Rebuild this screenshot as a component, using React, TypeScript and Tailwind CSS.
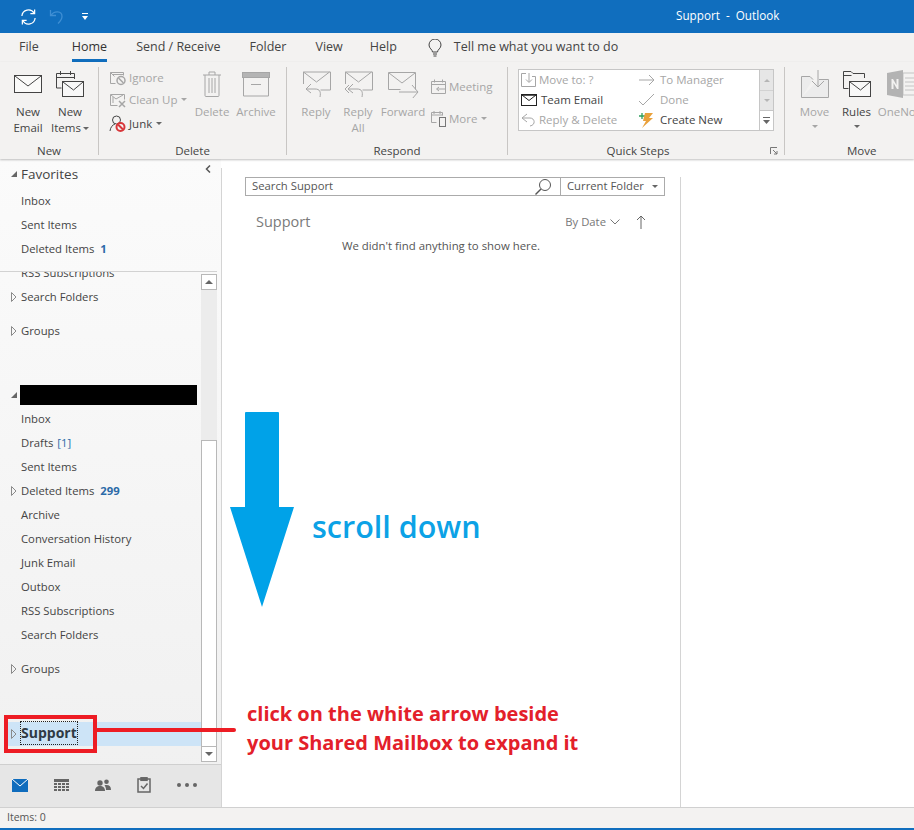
import type { ReactNode } from "react";

const dim = "#a6a6a6";
const dark = "#444444";

const Envelope = ({ color = dark, className = "" }: { color?: string; className?: string }) => (
  <svg viewBox="0 0 30 20" className={className} fill="none" stroke={color} strokeWidth="1">
    <rect x="1.5" y="1.5" width="27" height="17" fill="#fff" fillOpacity="0.6" />
    <path d="M2 2l13 10L28 2" />
  </svg>
);

const IconNewItems = () => (
  <svg viewBox="0 0 30 30" className="w-[30px] h-[30px]" fill="none" stroke={dark}>
    <path d="M1.5 19V4.5h18V10M1.5 8.5h18M5.5 2v4M15.5 2v4" />
    <path d="M1.5 19h5" />
    <rect x="7.5" y="12.5" width="21" height="15" fill="#f8f8f8" />
    <path d="M8 13l10.5 8L28 13" />
  </svg>
);

const IconIgnore = () => (
  <svg viewBox="0 0 18 16" className="w-[18px] h-[16px]" fill="none" stroke={dim}>
    <path d="M1.5 13.5V2.5h13v3M1.5 2.5l4 4" />
    <path d="M4 4.5h11M1.5 13.5h5" />
    <circle cx="12" cy="10.5" r="4" strokeWidth="1.5" />
    <path d="M9.5 8l5 5" strokeWidth="1.5" />
  </svg>
);

const IconCleanUp = () => (
  <svg viewBox="0 0 18 16" className="w-[18px] h-[16px]" fill="none" stroke={dim}>
    <path d="M1.5 13.5V2.5h14v5M1.5 13.5h7M2 3l5 4 7-4" />
    <path d="M4 5v6" />
    <path d="M10 9l6 6M16 9l-6 6" strokeWidth="1.5" />
  </svg>
);

const IconJunk = () => (
  <svg viewBox="0 0 18 18" className="w-[18px] h-[18px]" fill="none">
    <circle cx="7.5" cy="5" r="4" stroke={dark} />
    <path d="M1 16c.5-4 2.500-6 5-7" stroke={dark} />
    <circle cx="11.5" cy="12" r="4" stroke="#d8373a" strokeWidth="2" />
    <path d="M9 9.500l5 5" stroke="#d8373a" strokeWidth="2" />
  </svg>
);

const IconTrash = () => (
  <svg viewBox="0 0 20 28" className="w-[20px] h-[28px]" fill="none" stroke={dim}>
    <path d="M1 5h18M7 5V2h6v3M3 5v20.500q0 1 1 1h12q1 0 1-1V5M7 8v15M10 8v15M13 8v15" />
  </svg>
);

const IconArchive = () => (
  <svg viewBox="0 0 28 25" className="w-[28px] h-[25px] mt-[2px]" fill="none" stroke={dim}>
    <rect x="0.500" y="0.500" width="27" height="5" fill="#b4b4b4" />
    <path d="M1.500 6v18h25V6M9 12.500h10" />
  </svg>
);

const IconReply = ({ all }: { all?: boolean }) => (
  <svg viewBox="0 0 30 28" className="w-[30px] h-[28px]" fill="none" stroke={dim}>
    <path d="M3 3h27v18H20M3 3v12M3 3l13 10L29 3" transform="translate(-.5 -1)" />
    {all && <path d="M6 15l-4 4 4 4" />}
    <path d="M10 14l-5 5 5 4M5 19h9c5 0 6 3 5 8" />
  </svg>
);

const IconForward = () => (
  <svg viewBox="0 0 32 28" className="w-[32px] h-[28px]" fill="none" stroke={dim}>
    <path d="M1.500 19.500v-17h27v17M1.500 19.500h12M2 3l13 10L28 3" />
    <path d="M12 22h19M25 15l6 7-6 7" />
  </svg>
);

const IconMeeting = () => (
  <svg viewBox="0 0 17 17" className="w-[17px] h-[17px]" fill="none" stroke={dim}>
    <path d="M1.500 15.500v-12h14v12zM1.500 6.500h14M4.500 1.500v3M12.500 1.500v3" />
    <path d="M9 9l-2.500 2 2.500 2M7 11h8" />
  </svg>
);

const IconMore = () => (
  <svg viewBox="0 0 17 17" className="w-[17px] h-[17px]" fill="none" stroke={dim}>
    <path d="M1.500 12.500v-10h11v3M1.500 5h11M4 1v3M10 1v3M1.500 12.500h5" />
    <rect x="9.500" y="7.500" width="6" height="9" fill="#f3f2f1" stroke="#777" />
  </svg>
);

const IconBulb = () => (
  <svg viewBox="0 0 14 18" className="w-[14px] h-[18px]" fill="none" stroke={dark}>
    <path d="M4.500 13c0-2.500-3.500-3.500-3.500-7a6 6 0 0 1 12 0c0 3.500-3.500 4.500-3.500 7zM5 15h4M5.500 17h3" />
  </svg>
);

const IconMoveTo = () => (
  <svg viewBox="0 0 16 16" className="w-[16px] h-[16px]" fill="none" stroke={dim}>
    <path d="M5 1.500H.5v13h14v-10H11M8 1v9M5 7.500l3 3 3-3" />
  </svg>
);

const IconMove = () => (
  <svg viewBox="0 0 30 30" className="w-[30px] h-[30px]" fill="none" stroke={dim}>
    <path d="M1.500 28.500V7.500H10l3 3M1.500 28.500h27v-18H19" fill="#ececec" />
    <path d="M18 1v17M12 12l6 6 6-6" />
  </svg>
);

const IconRules = () => (
  <svg viewBox="0 0 30 30" className="w-[30px] h-[30px]" fill="none" stroke={dark}>
    <path d="M1.500 19.500V2.500H9l2 2h11.500V9M1.500 6.500h8M1.500 19.500h5" />
    <rect x="7.500" y="12.500" width="21" height="15" fill="#f8f8f8" />
    <path d="M8 13l10.500 8L28 13" />
  </svg>
);

const IconOneNote = () => (
  <svg viewBox="0 0 30 30" className="w-[30px] h-[30px]">
    <rect x="16" y="4" width="14" height="22" fill="#f3f2f1" stroke="#c4c4c4" />
    <path d="M18 9h12M18 13h12M18 17h12M18 21h12" stroke="#c4c4c4" />
    <path d="M0 4l16-3v28L0 26z" fill="#b3b3b3" />
    <path d="M4.500 20V10h1.500l3.500 6v-6h2v10h-1.500l-3.500-6v6z" fill="#f3f2f1" />
  </svg>
);

const Caret = ({ color = "#666666" }: { color?: string }) => (
  <svg viewBox="0 0 6 3" className="inline-block w-[6px] h-[3px]">
    <path d="M0 0h6L3 3z" fill={color} />
  </svg>
);

const LargeButton = ({
  width,
  icon,
  lines,
  disabled,
  caret,
}: {
  width: string;
  icon: ReactNode;
  lines: ReactNode[];
  disabled?: boolean;
  caret?: boolean;
}) => (
  <div className={`${width} flex flex-col items-center ${disabled ? "text-[#a6a6a6]" : "text-[#444]"}`}>
    <div className="h-[33px] flex items-center justify-center">{icon}</div>
    <div className="mt-[4px] leading-[16px] text-center whitespace-nowrap">
      {lines.map((l, i) => (
        <div key={i}>{l}</div>
      ))}
      {caret && (
        <div className="leading-[12px]">
          <Caret color={disabled ? "#a6a6a6" : "#666666"} />
        </div>
      )}
    </div>
  </div>
);

const SmallButton = ({ icon, label, disabled, caret }: { icon: ReactNode; label: string; disabled?: boolean; caret?: boolean }) => (
  <div className={`flex items-center gap-[2px] whitespace-nowrap ${disabled ? "text-[#a6a6a6]" : "text-[#444]"}`}>
    {icon}
    <span>{label}</span>
    {caret && (
      <span className="ml-[2px] flex">
        <Caret color={disabled ? "#a6a6a6" : "#666666"} />
      </span>
    )}
  </div>
);

const Group = ({ width, label, children, launcher }: { width: string; label: string; children: ReactNode; launcher?: boolean }) => (
  <div className={`${width} shrink-0 flex flex-col border-r border-[#c8c6c4] mb-[4px] relative`}>
    <div className="flex-1 flex">{children}</div>
    <div className={`text-center text-[#444] leading-[14px] -mb-[3px] ${launcher ? "pr-[16px]" : ""}`}>{label}</div>
    {launcher && (
      <svg viewBox="0 0 8 8" className="absolute right-[6px] bottom-0 w-[8px] h-[8px]" fill="none" stroke="#777">
        <path d="M.5 7V.5H7" />
        <path d="M3 3l4 4M7 4v3H4" />
      </svg>
    )}
  </div>
);

const Row = ({ label, arrow, bold, count, mt = "" }: { label: string; arrow?: boolean; bold?: boolean; count?: ReactNode; mt?: string }) => (
  <div className={`h-[24px] flex items-center pl-[11px] ${mt} text-[#444]`}>
    <span className="w-[10px] shrink-0">{arrow && <OpenTri />}</span>
    <span className={bold ? "font-semibold" : ""}>{label}</span>
    {count}
  </div>
);

const OpenTri = () => (
  <svg viewBox="0 0 6 10" className="w-[6px] h-[10px]" fill="none" stroke="#8a8a8a">
    <path d="M.5.5l4.500 4.500-4.500 4.500z" />
  </svg>
);

const DownTri = () => (
  <svg viewBox="0 0 6 6" className="w-[6px] h-[6px]">
    <path d="M6 0v6H0z" fill="#666" />
  </svg>
);

const Count = ({ children }: { children: ReactNode }) => (
  <span className="ml-[6px] font-bold text-[#2b6aa8]">{children}</span>
);

const Sidebar = () => (
  <div className="w-[221px] shrink-0 flex flex-col bg-linear-to-b from-[#fbfbfb] to-[#f0f0f0] text-[11.300px]">
    <div className="h-[113px] shrink-0 border-b border-[#d2d2d2] mr-[4px] relative">
      <div className="h-[29px] flex items-center pl-[11px] pt-[1px] text-[#444] mb-[1px]">
        <span className="w-[10px]">
          <DownTri />
        </span>
        <span className="text-[13.500px]">Favorites</span>
      </div>
      <Row label="Inbox" />
      <Row label="Sent Items" />
      <Row label="Deleted Items" count={<Count>1</Count>} />
      <svg viewBox="0 0 6 8" className="absolute right-[6px] top-[6px] w-[6px] h-[8px]" fill="none" stroke="#555" strokeWidth="1.500">
        <path d="M5 .5L1.500 4 5 7.500" />
      </svg>
    </div>
    <div className="flex-1 flex min-h-0">
      <div className="w-[201px] shrink-0 overflow-hidden">
        <div className="-mt-[11px]">
          <Row label="RSS Subscriptions" />
          <Row label="Search Folders" arrow />
          <Row label="Groups" arrow mt="mt-[10px]" />
          <div className="flex items-center pl-[11px] mt-[42px] h-[20px]">
            <span className="w-[9px]">
              <DownTri />
            </span>
            <div className="w-[177px] h-[20px] bg-black" />
          </div>
          <div className="mt-[2px]">
            <Row label="Inbox" />
            <Row label="Drafts" count={<span className="ml-[4px] text-[#2b6aa8]">[1]</span>} />
            <Row label="Sent Items" />
            <Row label="Deleted Items" arrow count={<Count>299</Count>} />
            <Row label="Archive" />
            <Row label="Conversation History" />
            <Row label="Junk Email" />
            <Row label="Outbox" />
            <Row label="RSS Subscriptions" />
            <Row label="Search Folders" />
            <Row label="Groups" arrow mt="mt-[10px]" />
          </div>
          <div className="mt-[41px] ml-[8px] h-[24px] flex items-center pl-[3px] bg-[#cde4f7] text-[#303a44]">
            <span className="w-[10px] shrink-0">
              <OpenTri />
            </span>
            <span className="-mt-[2px] font-bold text-[14px] outline-1 outline-dotted outline-[#222] leading-[22px]">Support</span>
          </div>
        </div>
      </div>
      <div className="w-[16px] shrink-0 flex flex-col pt-[2px] pb-[2px]">
        <div className="h-[16px] bg-white border border-[#b8b8b8] flex items-center justify-center">
          <svg viewBox="0 0 8 4" className="w-[8px] h-[4px]">
            <path d="M0 4l4-4 4 4z" fill="#666" />
          </svg>
        </div>
        <div className="h-[150px] bg-[#ececec]" />
        <div className="flex-1 bg-white border-x border-t border-[#b8b8b8]" />
        <div className="h-[16px] bg-white border border-[#b8b8b8] flex items-center justify-center">
          <svg viewBox="0 0 8 4" className="w-[8px] h-[4px]">
            <path d="M0 0l4 4 4-4z" fill="#666" />
          </svg>
        </div>
      </div>
    </div>
    <div className="h-[43px] shrink-0 bg-[#e6e6e6] border-t border-[#cfcfcf] flex items-center pl-[12px] pb-[2px] gap-[26px]">
      <svg viewBox="0 0 16 13" className="w-[16px] h-[13px]">
        <rect width="16" height="13" fill="#0f6cbd" />
        <path d="M0 0l8 7 8-7" fill="none" stroke="#fff" />
      </svg>
      <svg viewBox="0 0 15 13" className="w-[15px] h-[13px]" fill="#666">
        <rect width="15" height="3" />
        <path d="M0 4h3v2H0zM4 4h3v2H4zM8 4h3v2H8zM12 4h3v2h-3zM0 7h3v2H0zM4 7h3v2H4zM8 7h3v2H8zM12 7h3v2h-3zM0 10h3v2H0zM4 10h3v2H4zM8 10h3v2H8zM12 10h3v2h-3z" />
      </svg>
      <svg viewBox="0 0 16 12" className="w-[16px] h-[12px]" fill="#666">
        <circle cx="5" cy="4" r="2.700" />
        <path d="M0 12c0-3.500 2-5 5-5s5 1.500 5 5z" />
        <circle cx="11.500" cy="2.700" r="2.300" />
        <path d="M11 11h5c0-3.500-1.500-5-4.500-5-1 0-1.500 0-2 .5 1 1 1.500 2.500 1.500 4.500z" />
      </svg>
      <svg viewBox="0 0 14 16" className="w-[14px] h-[16px]" fill="none" stroke="#666" strokeWidth="1.500">
        <path d="M4 2H1v13h12V2h-3" />
        <rect x="4" y="0.800" width="6" height="2.500" fill="#666" />
        <path d="M4 9l2.500 2.500L10.500 6.500" />
      </svg>
      <div className="flex gap-[4px]">
        <div className="w-[4px] h-[4px] rounded-full bg-[#666]" />
        <div className="w-[4px] h-[4px] rounded-full bg-[#666]" />
        <div className="w-[4px] h-[4px] rounded-full bg-[#666]" />
      </div>
    </div>
  </div>
);

const MessageList = () => (
  <div className="w-[458px] shrink-0 bg-white pt-[18px] pl-[23px] pr-[15px]">
    <div className="h-[19px] w-[420px] border border-[#ababab] flex items-center">
      <span className="flex-1 pl-[6px] text-[#555] text-[11.300px]">Search Support</span>
      <svg viewBox="0 0 18 18" className="w-[18px] h-[18px] mr-[8px]" fill="none" stroke="#555">
        <circle cx="11" cy="7" r="5.500" />
        <path d="M7 11l-5.500 5.500" strokeWidth="1.500" />
      </svg>
      <div className="w-[104px] h-full border-l border-[#ababab] flex items-center pl-[6px] text-[#555] text-[11.300px]">
        <span className="flex-1">Current Folder</span>
        <span className="flex mr-[6px]">
          <Caret />
        </span>
      </div>
    </div>
    <div className="flex items-center mt-[13px] h-[26px]">
      <span className="ml-[11px] flex-1 text-[14.500px] text-[#7a7a7a]">Support</span>
      <span className="text-[#777] text-[11.300px]">By Date</span>
      <svg viewBox="0 0 10 6" className="ml-[4px] w-[10px] h-[6px]" fill="none" stroke="#777">
        <path d="M.5.500L5 5 9.500.500" />
      </svg>
      <svg viewBox="0 0 10 14" className="ml-[16px] mr-[19px] w-[10px] h-[14px]" fill="none" stroke="#666">
        <path d="M5 14V1M1 5l4-4 4 4" />
      </svg>
    </div>
    <div className="text-center text-[#555] text-[11.400px] leading-[16px] mt-[3px] pr-[28px]">We didn't find anything to show here.</div>
  </div>
);

const Annotations = () => (
  <>
    <svg viewBox="0 0 64 195" className="absolute left-[230px] top-[412px] w-[64px] h-[195px]">
      <path d="M15 1q0-1 1-1h32q1 0 1 1v94h15L32 195 0 95h15z" fill="#00a2e8" />
    </svg>
    <div className="absolute left-[312px] top-[504px] text-[30.500px] leading-[44px] font-semibold text-[#0ca2e6] whitespace-nowrap">
      scroll down
    </div>
    <div className="absolute left-[4px] top-[715px] w-[93px] h-[38px] border-[4px] border-[#ed1c24]" />
    <div className="absolute left-[97px] top-[728px] w-[139px] h-[4px] rounded-r-full bg-[#ed1c24]" />
    <div className="absolute left-[247px] top-[699px] text-[20px] leading-[29px] font-bold text-[#e3202a] whitespace-nowrap">
      <div>click on the white arrow beside</div>
      <div>your Shared Mailbox to expand it</div>
    </div>
  </>
);

export default function App() {
  return (
    <div className="relative w-[914px] h-[830px] overflow-hidden flex flex-col bg-white text-[12px] font-['Open_Sans',sans-serif]">
      <div className="h-[33px] shrink-0 bg-[#106ebe] flex items-center text-white text-[11.700px] relative">
        <svg viewBox="0 0 18 16" className="ml-[20px] w-[17px] h-[16px]" fill="none" stroke="#fff" strokeWidth="1.300">
          <path d="M2 7a7 7 0 0 1 13-3M16 9a7 7 0 0 1-13 3" />
          <path d="M15.500 0v4.500H11M2.500 16v-4.500H7" />
        </svg>
        <svg viewBox="0 0 16 16" className="ml-[12px] w-[16px] h-[16px]" fill="none" stroke="#3f8fd4" strokeWidth="1.300">
          <path d="M1.500 1v5.500H7M2 6.500c3-5 11-5 11 1 0 3-2 5-4 7" />
        </svg>
        <svg viewBox="0 0 6 7" className="ml-[17px] w-[6px] h-[7px]">
          <path d="M0 0h6v1H0zM0 3h6L3 7z" fill="#fff" />
        </svg>
        <div className="absolute left-[676px] top-[7px] whitespace-pre leading-[17px]">Support  -  Outlook</div>
      </div>

      <div className="h-[29px] shrink-0 bg-[#f3f2f1] flex items-end text-[#444] text-[12.500px] pl-[19px]">
        <div className="h-[29px] flex items-center pt-[3px] border-b-[3px] border-transparent">File</div>
        <div className="ml-[33px] h-[29px] flex items-center pt-[3px] border-b-[3px] border-[#106ebe] text-[#333]">Home</div>
        <div className="ml-[29px] h-[29px] flex items-center pt-[3px] border-b-[3px] border-transparent">Send / Receive</div>
        <div className="ml-[29px] h-[29px] flex items-center pt-[3px] border-b-[3px] border-transparent">Folder</div>
        <div className="ml-[29px] h-[29px] flex items-center pt-[3px] border-b-[3px] border-transparent">View</div>
        <div className="ml-[27px] h-[29px] flex items-center pt-[3px] border-b-[3px] border-transparent">Help</div>
        <div className="ml-[31px] h-[29px] flex items-center gap-[12px] pt-[3px] border-b-[3px] border-transparent">
          <IconBulb />
          <span>Tell me what you want to do</span>
        </div>
      </div>

      <div className="h-[97px] shrink-0 bg-[#f3f2f1] shadow-[0_1px_2px_rgba(0,0,0,0.25)] z-10 flex pt-[5px] text-[11.500px]">
        <Group width="w-[99px]" label="New">
          <div className="flex pl-[7px]">
            <LargeButton width="w-[42px]" icon={<Envelope className="w-[30px] h-[20px]" />} lines={["New", "Email"]} />
            <LargeButton
              width="w-[42px]"
              icon={<IconNewItems />}
              lines={[
                "New",
                <span className="inline-flex items-center gap-[2px]">
                  Items <Caret />
                </span>,
              ]}
            />
          </div>
        </Group>
        <Group width="w-[188px]" label="Delete">
          <div className="flex pl-[10px]">
            <div className="w-[81px] flex flex-col gap-[5px] pt-[2px]">
              <SmallButton disabled icon={<IconIgnore />} label="Ignore" />
              <SmallButton disabled icon={<IconCleanUp />} label="Clean Up" caret />
              <div className="mt-[1px]">
                <SmallButton icon={<IconJunk />} label="Junk" caret />
              </div>
            </div>
            <LargeButton disabled width="w-[44px]" icon={<IconTrash />} lines={["Delete"]} />
            <LargeButton disabled width="w-[44px]" icon={<IconArchive />} lines={["Archive"]} />
          </div>
        </Group>
        <Group width="w-[221px]" label="Respond">
          <div className="flex pl-[8px]">
            <LargeButton disabled width="w-[42px]" icon={<IconReply />} lines={["Reply"]} />
            <LargeButton disabled width="w-[42px]" icon={<IconReply all />} lines={["Reply", "All"]} />
            <LargeButton disabled width="w-[48px]" icon={<IconForward />} lines={["Forward"]} />
            <div className="ml-[3px] flex flex-col gap-[15px] pt-[11px]">
              <SmallButton disabled icon={<IconMeeting />} label="Meeting" />
              <SmallButton disabled icon={<IconMore />} label="More" caret />
            </div>
          </div>
        </Group>
        <Group width="w-[277px]" label="Quick Steps" launcher>
          <div className="ml-[10px] mt-[2px] w-[256px] h-[62px] bg-white border border-[#c6c6c6] flex">
            <div className="w-[120px] flex flex-col pl-[2px] leading-[20px]">
              <SmallButton disabled icon={<IconMoveTo />} label="Move to: ?" />
              <SmallButton
                icon={
                  <svg viewBox="0 0 16 12" className="w-[16px] h-[12px] mr-[2px]" fill="#fff" stroke="#222">
                    <rect x="0.500" y="0.500" width="15" height="11" />
                    <path d="M1 1h14" strokeWidth="1.500" />
                    <path d="M1 1l7 5.500L15 1" fill="none" />
                  </svg>
                }
                label="Team Email"
              />
              <SmallButton
                disabled
                icon={
                  <svg viewBox="0 0 16 14" className="w-[16px] h-[14px]" fill="none" stroke="#a6a6a6">
                    <path d="M6 1L1 5l5 4M1 5h8c5 0 6 7 0 8" />
                  </svg>
                }
                label="Reply & Delete"
              />
            </div>
            <div className="flex-1 flex flex-col leading-[20px]">
              <SmallButton
                disabled
                icon={
                  <svg viewBox="0 0 16 12" className="w-[16px] h-[12px] mr-[3px]" fill="none" stroke="#a6a6a6">
                    <path d="M0 6h15M10 1l5 5-5 5" />
                  </svg>
                }
                label="To Manager"
              />
              <SmallButton
                disabled
                icon={
                  <svg viewBox="0 0 16 12" className="w-[16px] h-[12px] mr-[3px]" fill="none" stroke="#a6a6a6">
                    <path d="M0 7l4 4L15 0" />
                  </svg>
                }
                label="Done"
              />
              <SmallButton
                icon={
                  <svg viewBox="0 0 16 16" className="w-[16px] h-[16px] mr-[3px]">
                    <path d="M0 4h6M3 1v6" stroke="#2e9e5b" strokeWidth="1.300" fill="none" />
                    <path d="M6 1h8l-4 5h4L3 16l4-7H4z" fill="#e9a13b" />
                  </svg>
                }
                label="Create New"
              />
            </div>
            <div className="w-[14px] border-l border-[#c6c6c6] flex flex-col">
              <div className="h-[21px] bg-[#e6e6e6] border-b border-[#d2d2d2] flex items-center justify-center">
                <svg viewBox="0 0 6 3" className="w-[6px] h-[3px]">
                  <path d="M0 3l3-3 3 3z" fill="#b5b5b5" />
                </svg>
              </div>
              <div className="h-[19px] bg-[#e6e6e6] flex items-center justify-center">
                <Caret color="#b5b5b5" />
              </div>
              <div className="flex-1 border-t border-[#c6c6c6] flex items-center justify-center">
                <svg viewBox="0 0 7 7" className="w-[7px] h-[7px]">
                  <path d="M0 0h7v1H0zM0 3h7L3.500 7z" fill="#666" />
                </svg>
              </div>
            </div>
          </div>
        </Group>
        <div className="flex-1 flex flex-col min-w-0 mb-[4px]">
          <div className="flex-1 flex pl-[8px]">
            <LargeButton disabled caret width="w-[43px] shrink-0" icon={<IconMove />} lines={["Move"]} />
            <LargeButton caret width="w-[41px] shrink-0" icon={<IconRules />} lines={["Rules"]} />
            <LargeButton disabled width="w-[50px] shrink-0" icon={<IconOneNote />} lines={["OneNote"]} />
          </div>
          <div className="text-[#444] leading-[14px] pl-[62px] -mb-[3px]">Move</div>
        </div>
      </div>

      <div className="flex-1 flex min-h-0">
        <Sidebar />
        <div className="w-px shrink-0 mt-[9px] bg-[#d4d4d4]" />
        <MessageList />
        <div className="w-px shrink-0 mt-[18px] bg-[#d4d4d4]" />
        <div className="flex-1 bg-white" />
      </div>

      <div className="h-[21px] shrink-0 bg-[#f3f2f1] border-t border-[#d0d0d0] flex items-center pl-[7px] text-[10.500px] text-[#555]">Items: 0</div>
      <div className="h-[2px] shrink-0 bg-[#106ebe]" />

      <Annotations />
    </div>
  );
}
